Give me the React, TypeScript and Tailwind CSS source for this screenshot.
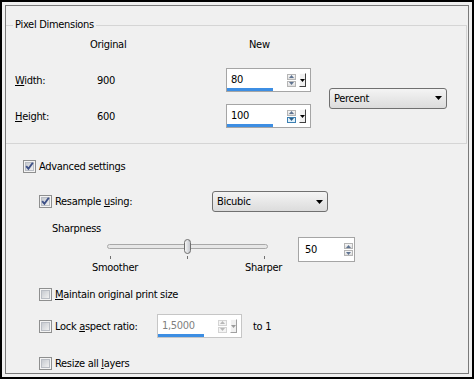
import React from 'react';

// Windows 7 style "Resize" dialog

function Check({ checked }: { checked?: boolean }) {
  return (
    <svg width="13" height="13" viewBox="0 0 13 13" className="shrink-0">
      <defs>
        <linearGradient id="cbInner" x1="0" y1="0" x2="1" y2="1">
          <stop offset="0" stopColor="#c4c8ce" />
          <stop offset="1" stopColor="#f3f3f3" />
        </linearGradient>
      </defs>
      <rect x="0.5" y="0.5" width="12" height="12" fill="#f4f4f4" stroke="#8e8f8f" />
      <rect x="2.5" y="2.5" width="8" height="8" fill="url(#cbInner)" stroke="#b9bdc4" />
      {checked && <path d="M3.2 6.2 L5.4 8.8 L9.8 2.8" fill="none" stroke="#3d5087" strokeWidth="1.9" />}
    </svg>
  );
}

function DownTri({ color = '#000' }: { color?: string }) {
  return (
    <svg width="7" height="4" viewBox="0 0 7 4">
      <path d="M0 0 H7 L3.5 4 Z" fill={color} />
    </svg>
  );
}

function SpinBtn({ up, hot, disabled }: { up?: boolean; hot?: boolean; disabled?: boolean }) {
  const border = hot ? 'border-[#3c7fb1] bg-[#e3f2fb]' : disabled ? 'border-[#d4d4d4] bg-[#f4f4f4]' : 'border-[#b5b5b5] bg-linear-to-b from-[#f7f7f7] to-[#dedede]';
  const fill = hot ? '#2c5f8a' : disabled ? '#b8b8b8' : '#5f7391';
  return (
    <div className={`flex h-[6px] w-[9px] items-center justify-center border ${border}`}>
      <svg width="5" height="3" viewBox="0 0 5 3">
        <path d={up ? 'M0 3 H5 L2.5 0 Z' : 'M0 0 H5 L2.5 3 Z'} fill={fill} />
      </svg>
    </div>
  );
}

function DropBtn({ disabled }: { disabled?: boolean }) {
  return (
    <div
      className={`ml-[3px] mr-[4px] flex h-[14px] w-[7px] items-center justify-center border border-t-[#fdfdfd] border-l-[#fdfdfd] ${
        disabled ? 'border-r-[#a0a0a0] border-b-[#a0a0a0] bg-[#f0f0f0]' : 'border-r-[#404040] border-b-[#404040] bg-[#f0f0f0]'
      }`}
    >
      <svg width="5" height="3" viewBox="0 0 5 3">
        <path d="M0 0 H5 L2.5 3 Z" fill={disabled ? '#9a9a9a' : '#000'} />
      </svg>
    </div>
  );
}

interface SpinProps {
  value: string;
  className: string;
  bar?: boolean;
  drop?: boolean;
  hot?: boolean;
  disabled?: boolean;
}

function SpinBox({ value, className, bar, drop, hot, disabled }: SpinProps) {
  return (
    <div className={`flex items-center border bg-white ${disabled ? 'border-[#c6c6c6]' : 'border-[#a5a5a5]'} ${className}`}>
      <div className="flex flex-1 flex-col self-stretch pt-[4px]">
        <span className={`pl-[4px] ${disabled ? 'text-[#7f7f7f]' : ''}`}>{value}</span>
        {bar && <div className="mt-[2px] h-[3px] w-[46px] bg-[#3d8ee3]" />}
      </div>
      <div className="flex flex-col gap-[1px]">
        <SpinBtn up disabled={disabled} />
        <SpinBtn hot={hot} disabled={disabled} />
      </div>
      {drop ? <DropBtn disabled={disabled} /> : <div className="w-[1px]" />}
    </div>
  );
}

function Select({ label, className }: { label: string; className: string }) {
  return (
    <div
      className={`flex h-[21px] items-center justify-between rounded-[3px] border border-[#707070] bg-linear-to-b from-[#f4f4f4] to-[#dcdcdc] pl-[4px] pr-[4px] ${className}`}
    >
      <span>{label}</span>
      <DownTri />
    </div>
  );
}

export default function App() {
  return (
    <div className="h-[381px] w-[474px] bg-white">
      <div className="h-[379px] border-2 border-black bg-[#f0f0f0] p-[3px] font-['DejaVu_Sans_Condensed','Liberation_Sans',Arial,sans-serif] text-[11px] leading-[13px] tracking-[-0.3px] text-black">
        <div className="flex h-full flex-col border border-[#7a7a7a]">
          {/* Pixel Dimensions */}
          <fieldset className="mt-[12px] mr-[1px] border border-l-0 border-[#d5d5d5] pt-[6px] pb-[15px]">
            <legend className="ml-[7px] px-[2px] leading-[14px]">Pixel Dimensions</legend>
            <div className="flex h-[13px]">
              <span className="ml-[84px] w-[159px]">Original</span>
              <span>New</span>
            </div>
            <div className="mt-[17px] flex items-center">
              <div className="flex flex-col gap-[12px]">
                <div className="flex h-[24px] items-center">
                  <span className="ml-[9px] w-[82px]">
                    <u>W</u>idth:
                  </span>
                  <span className="w-[129px]">900</span>
                  <SpinBox value="80" className="h-[24px] w-[85px]" bar drop />
                </div>
                <div className="flex h-[24px] items-center">
                  <span className="ml-[9px] w-[82px]">
                    <u>H</u>eight:
                  </span>
                  <span className="w-[129px]">600</span>
                  <SpinBox value="100" className="h-[24px] w-[85px]" bar drop hot />
                </div>
              </div>
              <Select label="Percent" className="ml-[18px] w-[118px]" />
            </div>
          </fieldset>

          {/* Advanced settings */}
          <div className="mt-[16px] ml-[17px] flex items-center">
            <Check checked />
            <span className="ml-[3px]">Advanced settings</span>
          </div>

          <div className="mt-[18px] ml-[33px] flex h-[21px] items-center">
            <Check checked />
            <span className="ml-[3px] w-[157px]">
              Resample <u>u</u>sing:
            </span>
            <Select label="Bicubic" className="w-[116px]" />
          </div>

          <span className="mt-[10px] ml-[46px]">Sharpness</span>

          <div className="mt-[2px] flex items-start">
            <div className="mt-[2px] ml-[86px] flex w-[190px] flex-col">
              <div className="relative ml-[15px] flex h-[15px] w-[161px] items-center">
                <div className="h-[5px] w-full rounded-full border border-[#a8a8a8] bg-[#e7e7e7]" />
                <div className="absolute top-0 left-[77px] h-[15px] w-[7px] rounded-full border border-[#6e6e6e] bg-linear-to-r from-[#f6f6f6] to-[#c5c8ce]" />
              </div>
              <div className="mt-[2px] ml-[15px] flex h-[3px] w-[161px] justify-between px-[3px]">
                <div className="w-px bg-[#707070]" />
                <div className="w-px bg-[#707070]" />
                <div className="w-px bg-[#707070]" />
              </div>
              <div className="mt-[2px] flex justify-between">
                <span>Smoother</span>
                <span>Sharper</span>
              </div>
            </div>
            <div className="ml-[16px] flex h-[25px] w-[57px] items-center border border-[#a5a5a5] bg-white">
              <span className="flex-1 pl-[6px]">50</span>
              <div className="mr-[1px] flex flex-col gap-[1px]">
                <SpinBtn up />
                <SpinBtn />
              </div>
            </div>
          </div>

          <div className="mt-[14px] ml-[33px] flex items-center">
            <Check />
            <span className="ml-[3px]">
              <u>M</u>aintain original print size
            </span>
          </div>

          <div className="mt-[13px] ml-[33px] flex h-[24px] items-center">
            <Check />
            <span className="ml-[3px] w-[102px]">
              Lock <u>a</u>spect ratio:
            </span>
            <SpinBox value="1,5000" className="h-[24px] w-[85px]" bar drop disabled />
            <span className="ml-[11px]">to 1</span>
          </div>

          <div className="mt-[19px] ml-[33px] flex items-center">
            <Check />
            <span className="ml-[3px]">
              Resize all <u>l</u>ayers
            </span>
          </div>
        </div>
      </div>
    </div>
  );
}
